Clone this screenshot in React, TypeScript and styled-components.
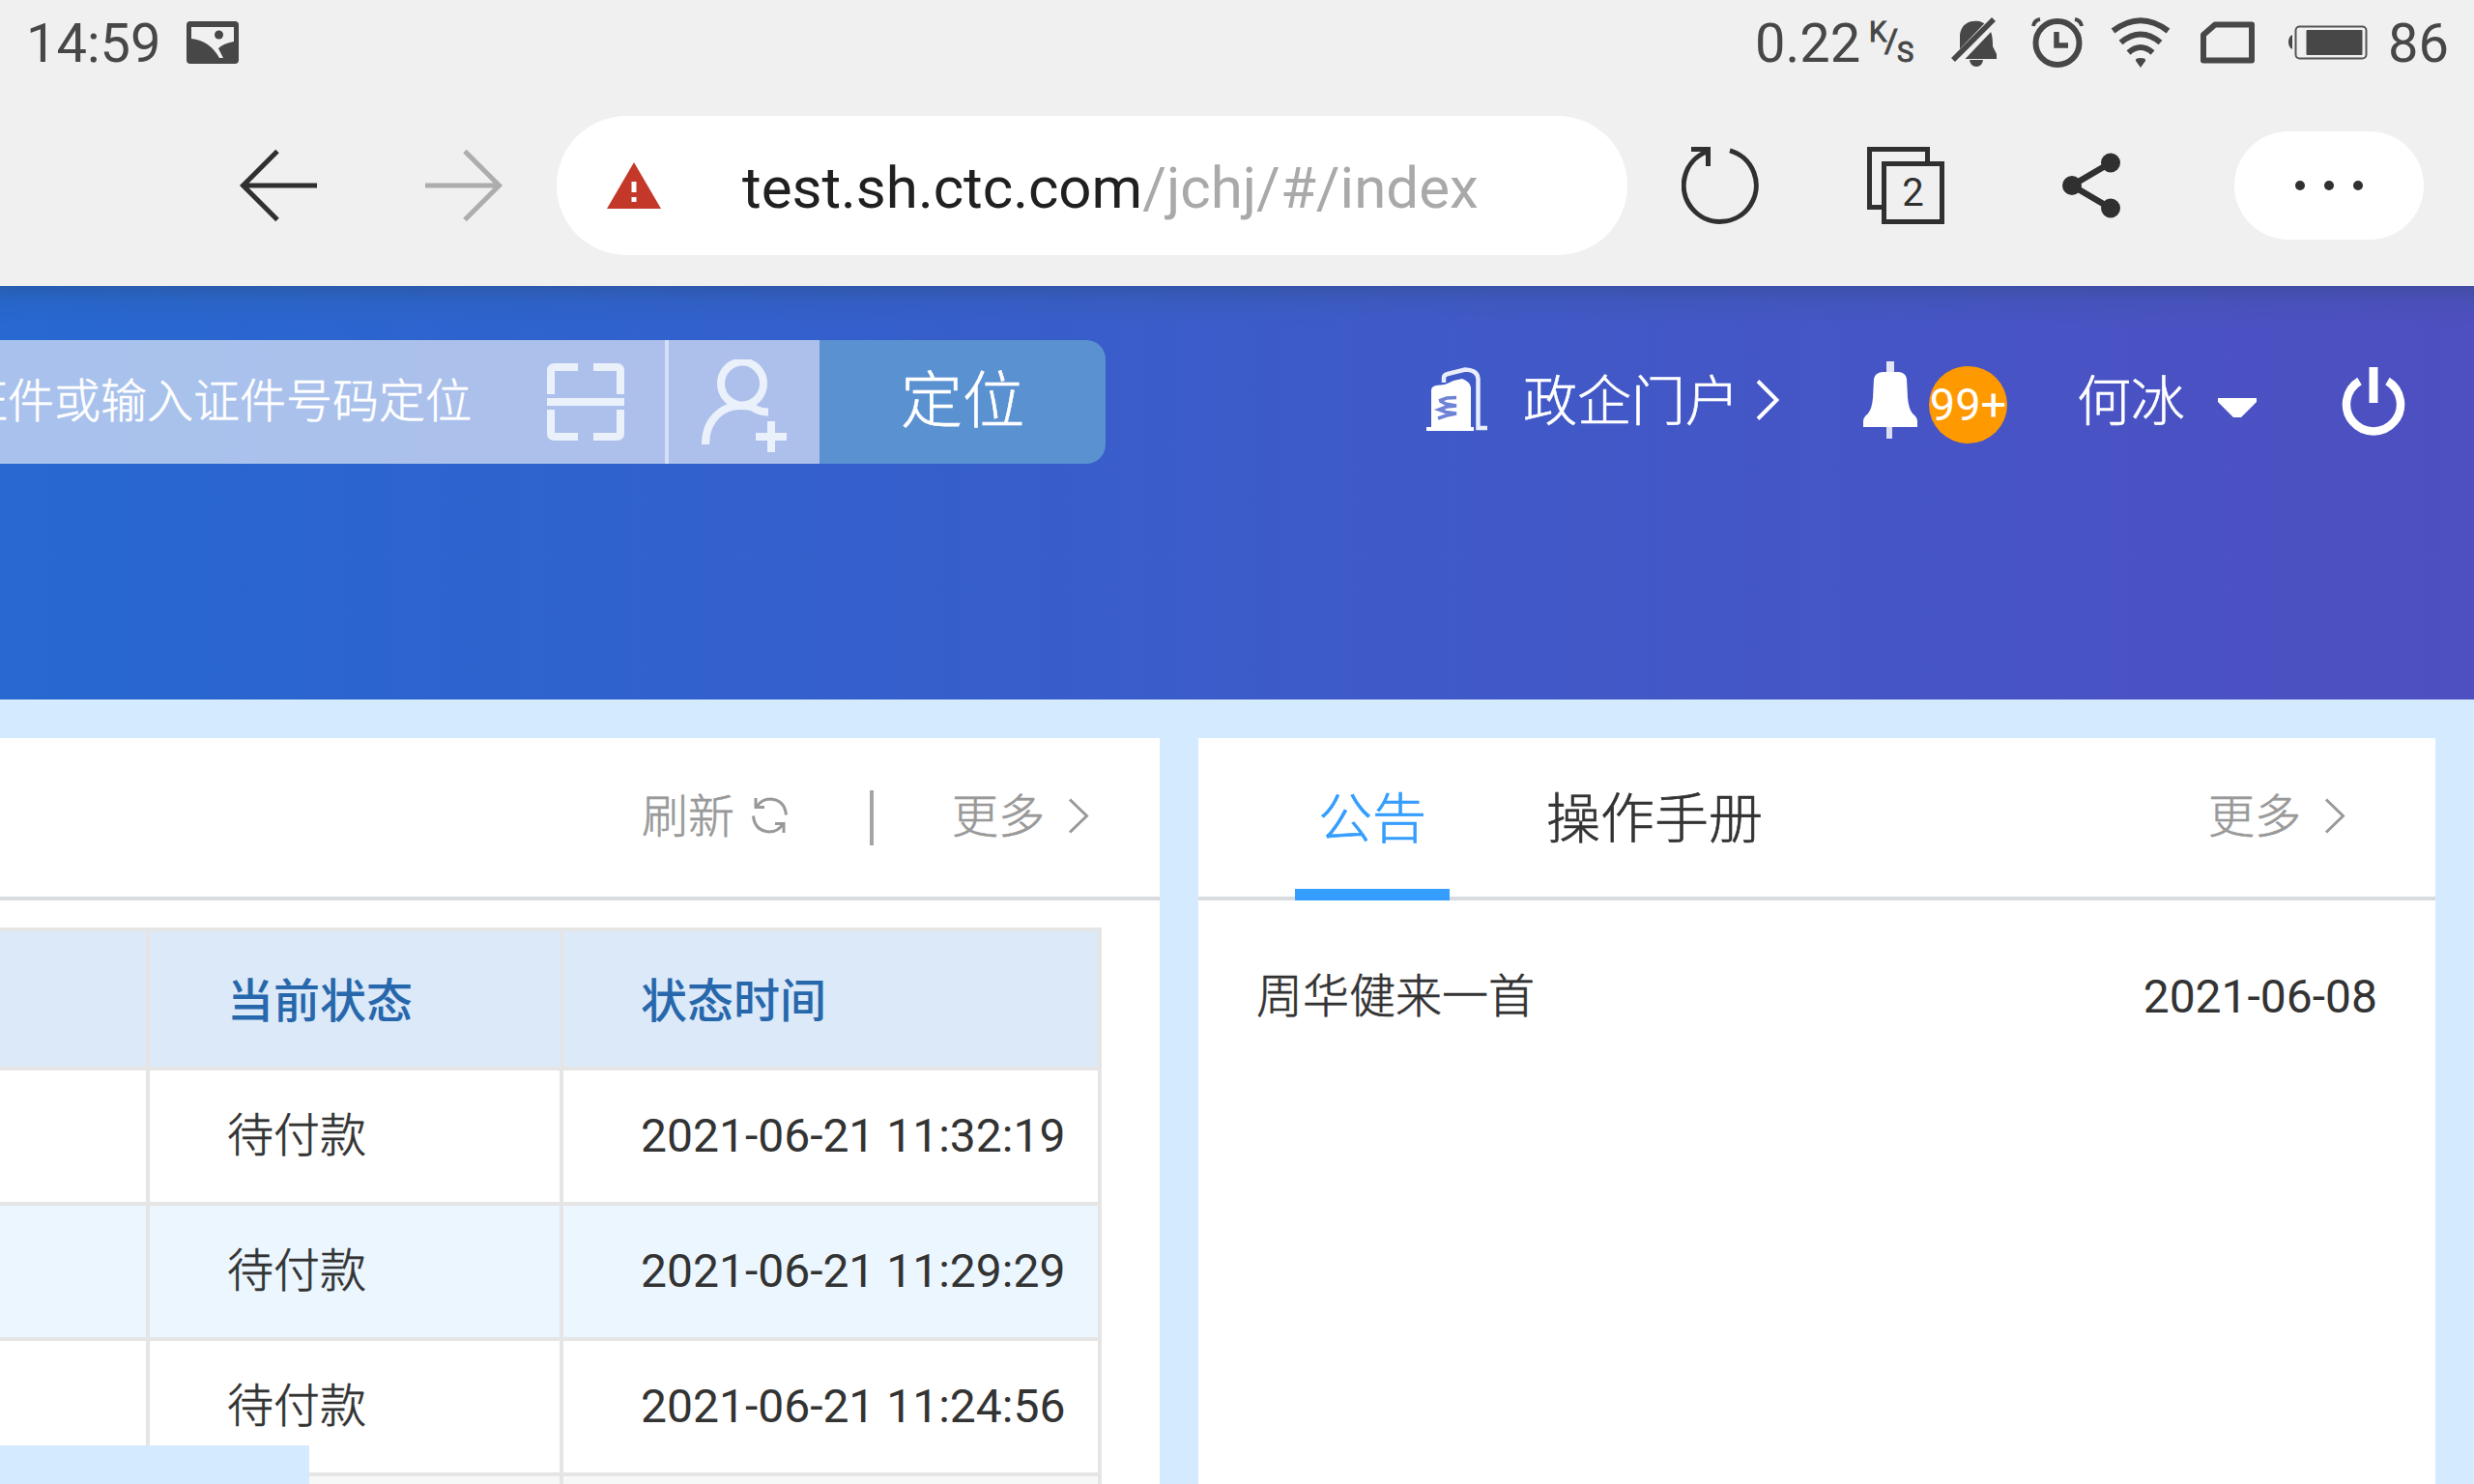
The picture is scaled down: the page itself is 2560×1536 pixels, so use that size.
import React from "react";
import styled, { createGlobalStyle } from "styled-components";

const Global = createGlobalStyle`
  *, *::before, *::after { box-sizing: border-box; }
  body { margin: 0; background: #f0f0f0; overflow: hidden; }
  svg { display: block; flex: none; }
`;

const Screen = styled.div`
  position: relative;
  width: 2560px;
  height: 1536px;
  overflow: hidden;
  display: flex;
  flex-direction: column;
  background: #d4eaff;
  font-family: Roboto, "Noto Sans CJK SC", sans-serif;
  font-weight: 400;
  color: #333;
  white-space: nowrap;
`;

const Han = styled.span<{ $medium?: boolean }>`
  font-family: "Noto Sans CJK SC", sans-serif;
  font-weight: ${(p) => (p.$medium ? 500 : 300)};
  line-height: 0;
  -webkit-text-stroke: ${(p) => (p.$medium ? 0 : 0.6)}px currentColor;
`;

const Gap = styled.i<{ $w: number }>`
  flex: none;
  width: ${(p) => p.$w}px;
`;

const Shift = styled.span<{ $up?: number; $down?: number }>`
  padding-bottom: ${(p) => (p.$up || 0) * 2}px;
  padding-top: ${(p) => (p.$down || 0) * 2}px;
`;

const StatusBar = styled.div`
  height: 88px;
  flex: none;
  display: flex;
  align-items: center;
  padding: 0 26px 0 27px;
  background: #f0f0f0;
  color: #474747;
  font-size: 56px;
  line-height: 84px;
`;

const Clock = styled.span`
  width: 142px;
  padding-top: 2px;
`;

const StatusRight = styled.div`
  margin-left: auto;
  display: flex;
  align-items: center;
`;

const Rate = styled.span`
  width: 109px;
  padding-top: 2px;
`;

const Percent = styled.span`
  padding-top: 2px;
`;

const Unit = styled.span`
  position: relative;
  width: 48px;
  height: 88px;
  font-size: 29px;
  -webkit-text-stroke: 1px currentColor;
`;

const UnitPart = styled.span<{ $x: number; $y: number; $size?: number }>`
  position: absolute;
  left: ${(p) => p.$x}px;
  top: ${(p) => p.$y}px;
  font-size: ${(p) => p.$size || 29}px;
  line-height: 30px;
`;

const Toolbar = styled.div`
  height: 208px;
  flex: none;
  display: flex;
  align-items: center;
  padding: 0 52px 0 246px;
  background: #f0f0f0;
`;

const UrlBox = styled.div`
  width: 1108px;
  height: 144px;
  flex: none;
  display: flex;
  align-items: center;
  padding-left: 52px;
  border-radius: 72px;
  background: #fff;
  font-size: 60px;
  line-height: 144px;
  color: #202020;
`;

const UrlText = styled.span`
  margin-left: 84px;
  padding-top: 5px;
`;

const UrlPath = styled.span`
  color: #a9a9a9;
`;

const TabCount = styled.div`
  position: relative;
  width: 80px;
  height: 80px;
  flex: none;
`;

const CountText = styled.span`
  position: absolute;
  left: 15px;
  top: 15px;
  width: 65px;
  line-height: 65px;
  text-align: center;
  font-size: 40px;
  color: #303030;
`;

const MoreButton = styled.div`
  width: 196px;
  height: 112px;
  flex: none;
  display: flex;
  align-items: center;
  justify-content: center;
  gap: 20px;
  border-radius: 56px;
  background: #fff;
`;

const Dot = styled.i`
  width: 10px;
  height: 10px;
  border-radius: 5px;
  background: #303030;
`;

const Banner = styled.header`
  height: 428px;
  flex: none;
  display: flex;
  align-items: flex-start;
  padding-top: 56px;
  background:
    linear-gradient(180deg, rgba(40, 70, 100, 0.3), rgba(40, 80, 110, 0.1) 16px, rgba(40, 80, 110, 0) 40px),
    linear-gradient(90deg, #2768d1 0%, #2e63ce 20%, #375ecb 40%, #3f5ac8 57%, #4754c5 80%, #4e4fc0 100%);
  color: #fff;
`;

const Search = styled.div`
  width: 688px;
  height: 128px;
  display: flex;
  align-items: center;
  justify-content: flex-end;
  padding-right: 42px;
  background: rgba(255, 255, 255, 0.6);
  font-size: 48px;
  line-height: 128px;
`;

const SearchDivider = styled.i`
  width: 4px;
  height: 128px;
  background: rgba(255, 255, 255, 0.8);
`;

const AddUser = styled.div`
  width: 156px;
  height: 128px;
  padding: 20px 0 0 34px;
  background: rgba(255, 255, 255, 0.6);
`;

const LocateButton = styled.button`
  width: 296px;
  height: 128px;
  border: 0;
  padding: 0;
  border-radius: 0 20px 20px 0;
  background: #5a91d0;
  color: #fff;
  font: 400 64px/120px Roboto, "Noto Sans CJK SC", sans-serif;
`;

const UserNav = styled.nav`
  height: 128px;
  display: flex;
  align-items: center;
  margin-left: 332px;
  font-size: 56px;
  line-height: 128px;
`;

const Badge = styled.span`
  width: 81px;
  height: 80px;
  margin: 6px 0 0 12px;
  border-radius: 50%;
  background: #ff9900;
  font-size: 47px;
  line-height: 79px;
  display: flex;
  justify-content: center;
`;

const Columns = styled.main`
  flex: none;
  display: flex;
  gap: 40px;
  padding-top: 40px;
  height: 812px;
`;

const Panel = styled.section<{ $w: number }>`
  width: ${(p) => p.$w}px;
  flex: none;
  background: #fff;
  overflow: hidden;
`;

const PanelHead = styled.div`
  height: 168px;
  display: flex;
  align-items: center;
  border-bottom: 4px solid #d9dcdf;
  font-size: 48px;
  line-height: 164px;
  color: #999;
`;

const OrdersHead = styled(PanelHead)`
  justify-content: flex-end;
  padding-right: 73px;
`;

const NoticeHead = styled(PanelHead)`
  padding: 0 93px 0 100px;
`;

const Bar = styled.i`
  width: 4px;
  height: 57px;
  background: #a5a5a5;
`;

const Tab = styled.div<{ $active?: boolean }>`
  height: 168px;
  padding: 1px 24px 0;
  align-self: flex-start;
  font-size: 56px;
  line-height: 166px;
  color: ${(p) => (p.$active ? "#349dfd" : "#333")};
  box-shadow: ${(p) => (p.$active ? "inset 0 -12px #349dfd" : "none")};
`;

const MoreLink = styled.span`
  margin-left: auto;
  display: flex;
  align-items: center;
`;

const Table = styled.div`
  margin-top: 28px;
  width: 1140px;
  border: solid #e5e5e5;
  border-width: 4px 4px 0 0;
`;

const Row = styled.div<{ $bg: string; $head?: boolean }>`
  display: grid;
  grid-template-columns: 155px 428px 553px;
  height: ${(p) => (p.$head ? 144 : 140)}px;
  background: ${(p) => p.$bg};
  border-bottom: 4px solid #e5e5e5;
  font-size: 48px;
  line-height: ${(p) => (p.$head ? 146 : 136)}px;
  color: ${(p) => (p.$head ? "#2768ad" : "#333")};
`;

const Cell = styled.div`
  height: 100%;
  padding-left: 80px;
  border-right: 4px solid #e5e5e5;
  &:last-child { border-right: 0; }
`;

const Notice = styled.div`
  display: flex;
  justify-content: space-between;
  padding: 68px 60px 0;
  font-size: 48px;
  line-height: 64px;
`;

const FloatBlock = styled.div`
  position: absolute;
  left: 0;
  bottom: 0;
  width: 320px;
  height: 40px;
  background: #d4eaff;
`;

const Chevron = ({ w, h, sw }: { w: number; h: number; sw: number }) => (
  <svg width={w} height={h} viewBox={`0 0 ${w} ${h}`} fill="none" stroke="currentColor" strokeWidth={sw}>
    <path d={`M2 1.5 L${w - 2.5} ${h / 2} L2 ${h - 1.5}`} />
  </svg>
);

const PictureIcon = () => (
  <svg width="54" height="44" viewBox="0 0 54 44">
    <rect width="54" height="44" rx="4" fill="#474747" />
    <path d="M5 6H49V21Q38 23 33 28L38 38H34Q24 20 5 18Z" fill="#f0f0f0" />
    <circle cx="33.500" cy="14" r="4.500" fill="#474747" />
  </svg>
);

const MuteIcon = () => (
  <svg width="52" height="52" viewBox="0 0 52 52" fill="#474747">
    <path d="M10 39V20C10 10 17 4 24 4C30 3 35 5 38 9C42 13 44 17 44 30L48 38V43H6V39Z" />
    <path d="M20 44H34Q33 51 27 51Q21 51 20 44Z" />
    <path d="M1 50L50 -1" stroke="#f0f0f0" strokeWidth="11" />
    <path d="M3 44L45 2" stroke="#474747" strokeWidth="5.500" />
  </svg>
);

const AlarmIcon = () => (
  <svg width="54" height="52" viewBox="0 0 54 52" fill="none" stroke="#474747">
    <circle cx="27" cy="26.500" r="22.500" strokeWidth="6" />
    <path d="M26 15V29H38" strokeWidth="5.500" />
    <path d="M2 9Q3 3 9 2M45 2Q51 3 52 9" strokeWidth="4" />
  </svg>
);

const WifiIcon = () => (
  <svg width="62" height="52" viewBox="0 0 62 52" fill="none" stroke="#474747" strokeWidth="6">
    <path d="M2.500 14Q31 -7.500 59.500 14" />
    <path d="M10.500 26Q31 9 51.500 26" />
    <path d="M18.500 36.500Q31 25.500 43.500 36.500" />
    <path d="M31 42Q37 42 36 45L31 52L26 45Q25 42 31 42Z" fill="#474747" stroke="none" />
  </svg>
);

const SimIcon = () => (
  <svg width="56" height="44" viewBox="0 0 56 44" fill="none" stroke="#474747" strokeWidth="6">
    <path d="M15 3.500H53V40.500H3V14Z" strokeLinejoin="round" />
  </svg>
);

const BatteryIcon = () => (
  <svg width="82" height="36" viewBox="0 0 82 36">
    <path d="M4 10V25Q0 23 0 17.500Q0 12 4 10Z" fill="#474747" />
    <rect x="7.500" y="1.500" width="73" height="33" rx="4" fill="none" stroke="#555" strokeWidth="2" />
    <rect x="18.500" y="5" width="58" height="26" rx="1" fill="#474747" />
  </svg>
);

const ArrowIcon = ({ color, flip }: { color: string; flip?: boolean }) => (
  <svg width="82" height="76" viewBox="0 0 82 76" fill="none" stroke={color} strokeWidth="5">
    <path
      d={flip ? "M0 38H76M41 2.500L76.500 38L41 73.500" : "M82 38H6M41 2.500L5.500 38L41 73.500"}
    />
  </svg>
);

const WarnIcon = () => (
  <svg width="56" height="48" viewBox="0 0 56 48">
    <path d="M28 0L56 48H0Z" fill="#c33828" />
    <path d="M28 20V31M28 36V41" stroke="#fff" strokeWidth="5" />
  </svg>
);

const ReloadIcon = () => (
  <svg width="80" height="80" viewBox="0 0 80 80" fill="none" stroke="#303030" strokeWidth="5">
    <path d="M50 3.800A37.500 37.500 0 1 1 26 5" />
    <path d="M10 2.500H27.500V20" />
  </svg>
);

const PagesIcon = () => (
  <svg width="80" height="80" viewBox="0 0 80 80" fill="none" stroke="#303030" strokeWidth="5">
    <path d="M62.500 15V2.500H2.500V62.500H15" />
    <rect x="17.500" y="17.500" width="60" height="60" />
  </svg>
);

const ShareIcon = () => (
  <svg width="60" height="68" viewBox="0 0 60 68" fill="#303030">
    <path d="M50 10.500L10 34L50 57.500" fill="none" stroke="#303030" strokeWidth="6.500" />
    <circle cx="10" cy="34" r="10" />
    <circle cx="50" cy="10.500" r="10" />
    <circle cx="50" cy="57.500" r="10" />
  </svg>
);

const ScanIcon = () => (
  <svg width="80" height="80" viewBox="0 0 80 80" fill="none" stroke="#ebf1fb" strokeWidth="8">
    <path d="M4 32V8Q4 4 8 4H32M48 4H72Q76 4 76 8V32M76 48V72Q76 76 72 76H48M32 76H8Q4 76 4 72V48M0 40H80" />
  </svg>
);

const AddUserIcon = () => (
  <svg width="90" height="96" viewBox="0 0 90 96" fill="none" stroke="#ebf1fb" strokeWidth="8">
    <ellipse cx="42" cy="25" rx="22" ry="22.500" />
    <path d="M4 88C4 60 24 47 42 48Q52 48 57 52Q62 54.500 69 54.500M72 64V96M56 80H88" />
  </svg>
);

const BuildingIcon = () => (
  <svg width="64" height="68" viewBox="0 0 64 68">
    <path d="M18 16V11Q18 8 22 7L40 2.500Q53 3 53.500 12V63H63" fill="none" stroke="#e8ecfb" strokeWidth="4.500" />
    <path d="M5 62V24Q5 20 10 19L19 18Q24 16 28 14L37 12Q45 15 46 21V62H49V66H0V62Z" fill="#fff" />
    <path
      d="M31 31.500L21 32L13 35M14 35L20 38L31 40L21 41L13 44L20 46.500L31 48L21 50L12 53"
      fill="none"
      stroke="#6f83d6"
      strokeWidth="3.500"
    />
  </svg>
);

const BellIcon = () => (
  <svg width="56" height="80" viewBox="0 0 56 80" fill="#fff">
    <rect x="24" y="0" width="8" height="12" opacity="0.85" />
    <path d="M20 11H37Q44 12 45 18L46 38Q47 49 51 54Q56 58 56 62V68H0V62Q0 58 5 54Q9 49 10 38L11 18Q12 12 20 11Z" />
    <rect x="24" y="68" width="6" height="12" opacity="0.8" />
  </svg>
);

const CaretIcon = () => (
  <svg width="40" height="20" viewBox="0 0 40 20" fill="#fff">
    <path d="M0 0H40V4L24 20H16L0 4Z" />
  </svg>
);

const PowerIcon = () => (
  <svg width="66" height="74" viewBox="0 0 66 74" fill="none" stroke="#fff">
    <path d="M18.500 14.500A28 28 0 1 0 47.500 14.500" strokeWidth="8.500" />
    <path d="M33 0V37" strokeWidth="9" />
  </svg>
);

const RefreshIcon = () => (
  <svg width="37" height="38" viewBox="0 0 37 38" fill="none" stroke="#999" strokeWidth="3">
    <path d="M5 10Q10 2 19 2Q34 3 35.500 18.500M4 1V10.500H13" />
    <path d="M32 28Q27 36 18 36Q3 35 1.500 19.500M33 37V27.500H24" />
  </svg>
);

const rows = [
  { bg: "#fff", state: "待付款", time: "2021-06-21 11:32:19" },
  { bg: "#ebf6ff", state: "待付款", time: "2021-06-21 11:29:29" },
  { bg: "#fff", state: "待付款", time: "2021-06-21 11:24:56" },
  { bg: "#f6f8f8", state: "", time: "" },
];

export default function App() {
  return (
    <Screen>
      <Global />
      <StatusBar>
        <Clock>14:59</Clock>
        <Gap $w={24} />
        <PictureIcon />
        <StatusRight>
          <Rate>0.22</Rate>
          <Gap $w={9} />
          <Unit>
            <UnitPart $x={0} $y={18}>K</UnitPart>
            <UnitPart $x={16} $y={27} $size={34}>/</UnitPart>
            <UnitPart $x={29} $y={39}>S</UnitPart>
          </Unit>
          <Gap $w={36} />
          <MuteIcon />
          <Gap $w={32} />
          <AlarmIcon />
          <Gap $w={28} />
          <WifiIcon />
          <Gap $w={31} />
          <SimIcon />
          <Gap $w={35} />
          <BatteryIcon />
          <Gap $w={21} />
          <Percent>86</Percent>
        </StatusRight>
      </StatusBar>

      <Toolbar>
        <ArrowIcon color="#303030" />
        <Gap $w={112} />
        <ArrowIcon color="#adadad" flip />
        <Gap $w={54} />
        <UrlBox>
          <WarnIcon />
          <UrlText>
            test.sh.ctc.com<UrlPath>/jchj/#/index</UrlPath>
          </UrlText>
        </UrlBox>
        <Gap $w={56} />
        <ReloadIcon />
        <Gap $w={112} />
        <TabCount>
          <PagesIcon />
          <CountText>2</CountText>
        </TabCount>
        <Gap $w={122} />
        <ShareIcon />
        <Gap $w={118} />
        <MoreButton>
          <Dot />
          <Dot />
          <Dot />
        </MoreButton>
      </Toolbar>

      <Banner>
        <Search>
          <span><Han>证件或输入证件号码定位</Han></span>
          <Gap $w={78} />
          <ScanIcon />
        </Search>
        <SearchDivider />
        <AddUser>
          <AddUserIcon />
        </AddUser>
        <LocateButton><Han>定位</Han></LocateButton>
        <UserNav>
          <Shift $up={2}><BuildingIcon /></Shift>
          <Gap $w={36} />
          <span><Han>政企门户</Han></span>
          <Gap $w={17} />
          <Shift $up={2}><Chevron w={24} h={42} sw={4} /></Shift>
          <Gap $w={87} />
          <Shift $up={2}><BellIcon /></Shift>
          <Badge>99+</Badge>
          <Gap $w={72} />
          <span><Han>何冰</Han></span>
          <Gap $w={34} />
          <Shift $down={6}><CaretIcon /></Shift>
          <Gap $w={88} />
          <Shift $down={1}><PowerIcon /></Shift>
        </UserNav>
      </Banner>

      <Columns>
        <Panel $w={1200}>
          <OrdersHead>
            <span><Han>刷新</Han></span>
            <Gap $w={18} />
            <Shift $up={2}><RefreshIcon /></Shift>
            <Gap $w={85} />
            <Bar />
            <Gap $w={81} />
            <span><Han>更多</Han></span>
            <Gap $w={24} />
            <Shift $up={2}><Chevron w={22} h={37} sw={3} /></Shift>
          </OrdersHead>
          <Table>
            <Row $head $bg="#dce9f8">
              <Cell />
              <Cell><Han $medium>当前状态</Han></Cell>
              <Cell><Han $medium>状态时间</Han></Cell>
            </Row>
            {rows.map((r, i) => (
              <Row key={i} $bg={r.bg}>
                <Cell />
                <Cell><Han>{r.state}</Han></Cell>
                <Cell>{r.time}</Cell>
              </Row>
            ))}
          </Table>
        </Panel>
        <Panel $w={1280}>
          <NoticeHead>
            <Tab $active><Han>公告</Han></Tab>
            <Gap $w={76} />
            <Tab><Han>操作手册</Han></Tab>
            <MoreLink>
              <span><Han>更多</Han></span>
              <Gap $w={24} />
              <Shift $up={2}><Chevron w={22} h={37} sw={3} /></Shift>
            </MoreLink>
          </NoticeHead>
          <Notice>
            <span><Han>周华健来一首</Han></span>
            <span>2021-06-08</span>
          </Notice>
        </Panel>
      </Columns>
      <FloatBlock />
    </Screen>
  );
}
